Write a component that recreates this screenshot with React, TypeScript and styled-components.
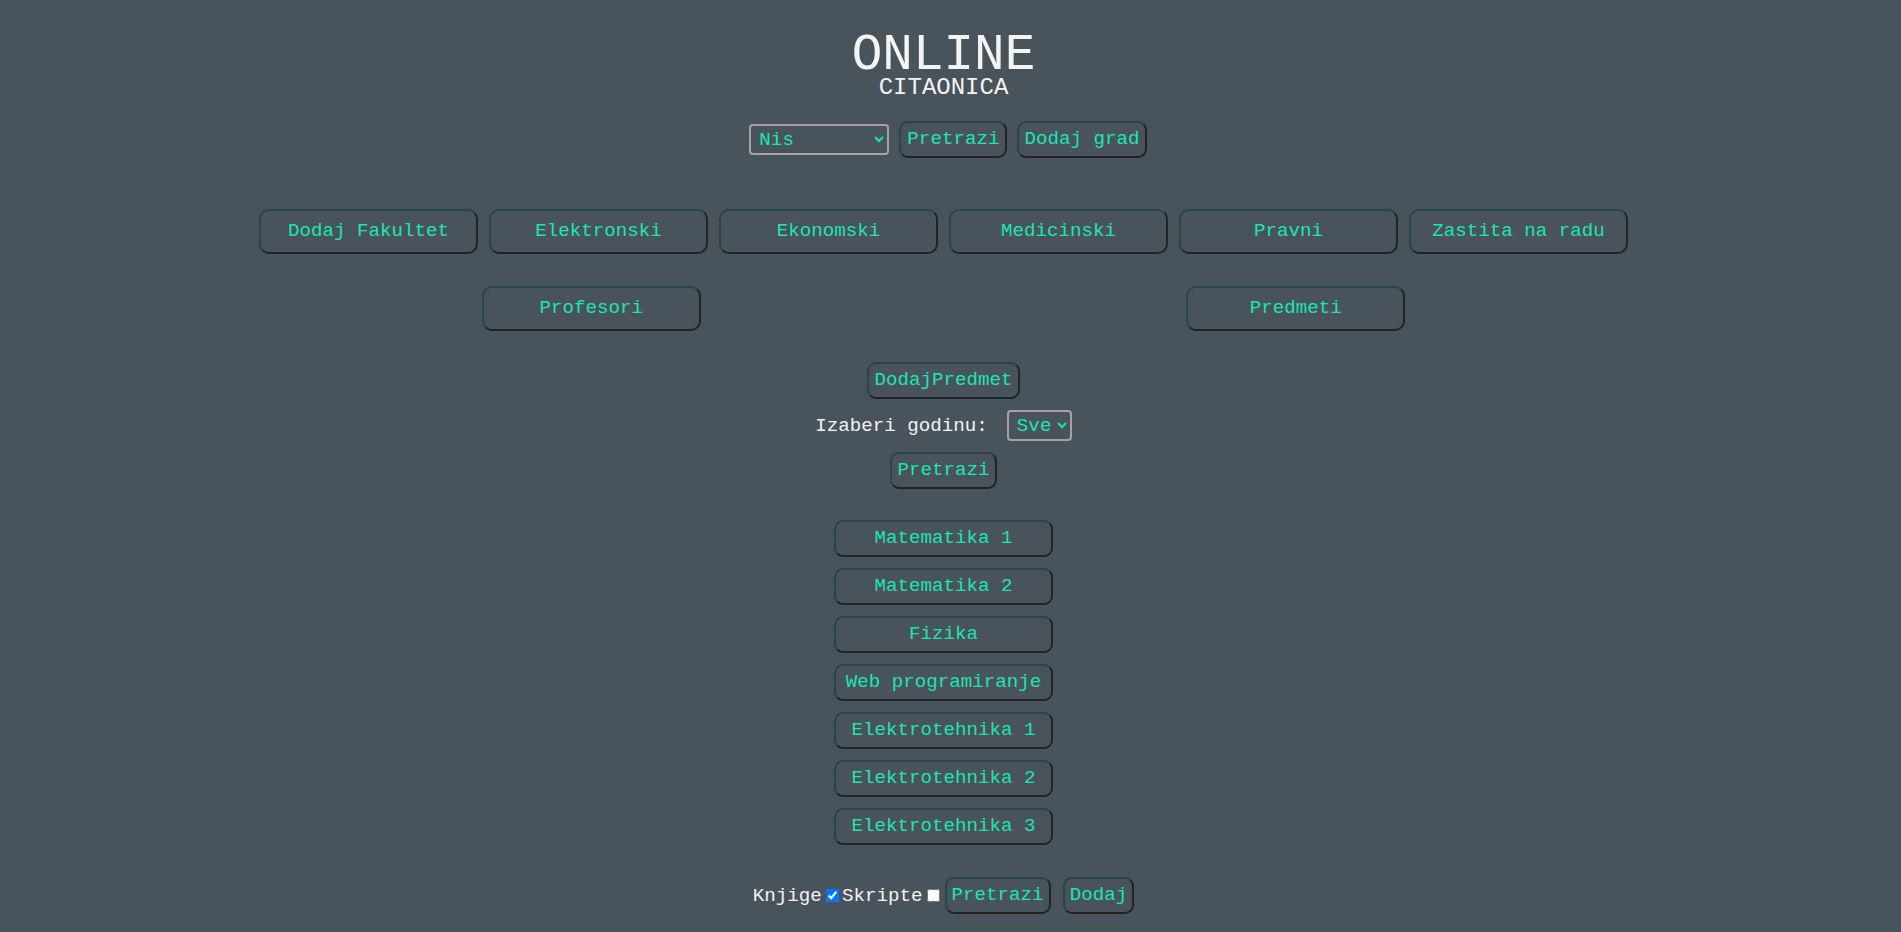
import React from "react";
import styled, { createGlobalStyle } from "styled-components";

const Global = createGlobalStyle`
  html, body { margin: 0; padding: 0; background: #48535b; }
  body { font-family: "Courier New", "Liberation Mono", monospace; font-size: 19.2px; color: #f2f2f2; }
`;

const Page = styled.div`
  display: flex;
  flex-direction: column;
  align-items: center;
  padding: 36px 14px 20px 0;
  min-height: 932px;
  box-sizing: border-box;
`;

const Title = styled.h1`
  margin: 0;
  font-family: "Courier New", "Liberation Mono", monospace;
  font-weight: normal;
  font-size: 51px;
  line-height: 40px;
  color: #f4f4f4;
`;

const Subtitle = styled.div`
  font-size: 24px;
  line-height: 24px;
  color: #f4f4f4;
`;

const Row = styled.div<{ $top: number; $gap?: number; $shift?: number }>`
  display: flex;
  align-items: center;
  justify-content: center;
  gap: ${(p) => p.$gap ?? 10}px;
  margin-top: ${(p) => p.$top}px;
  margin-left: ${(p) => p.$shift ?? 0}px;
`;

const SplitRow = styled.div<{ $top: number }>`
  display: flex;
  justify-content: space-around;
  width: 1409px;
  margin-top: ${(p) => p.$top}px;
`;

const Column = styled.div<{ $top: number }>`
  display: flex;
  flex-direction: column;
  align-items: center;
  gap: 11px;
  margin-top: ${(p) => p.$top}px;
`;

const Button = styled.button<{ $w?: number; $h?: number; $pad?: number; $ml?: number }>`
  font-family: "Courier New", "Liberation Mono", monospace;
  font-size: 19.2px;
  line-height: 23px;
  color: #1de5b2;
  background: #48535b;
  border: 2px solid;
  border-color: #25474a #1f2427 #1f2427 #25474a;
  border-radius: ${(p) => (p.$h && p.$h > 40 ? 10 : 9)}px;
  padding: 0 ${(p) => p.$pad ?? 5}px;
  margin-left: ${(p) => p.$ml ?? 0}px;
  width: ${(p) => (p.$w ? `${p.$w}px` : "auto")};
  height: ${(p) => p.$h ?? 37}px;
  box-sizing: border-box;
  white-space: nowrap;
  cursor: pointer;
`;

const Select = styled.select<{ $w: number }>`
  font-family: "Courier New", "Liberation Mono", monospace;
  font-size: 19.2px;
  color: #1de5b2;
  background: #48535b;
  border: 2px solid #a3a3a3;
  border-radius: 4px;
  width: ${(p) => p.$w}px;
  height: 31px;
  padding: 0 4px;
  box-sizing: border-box;
`;

const Label = styled.span`
  color: #f2f2f2;
  font-size: 19.2px;
  white-space: pre;
`;

const Check = styled.input`
  width: 13px;
  height: 13px;
  margin: 3px 3px 3px 4px;
`;

const fakulteti = ["Dodaj Fakultet", "Elektronski", "Ekonomski", "Medicinski", "Pravni", "Zastita na radu"];
const predmeti = [
  "Matematika 1",
  "Matematika 2",
  "Fizika",
  "Web programiranje",
  "Elektrotehnika 1",
  "Elektrotehnika 2",
  "Elektrotehnika 3",
];

export default function App() {
  return (
    <>
      <Global />
      <Page>
        <Title>ONLINE</Title>
        <Subtitle>CITAONICA</Subtitle>

        <Row $top={21} $gap={10} $shift={9}>
          <Select $w={140} defaultValue="Nis">
            <option value="Nis">Nis</option>
            <option value="Beograd">Beograd</option>
          </Select>
          <Button $pad={6}>Pretrazi</Button>
          <Button>Dodaj grad</Button>
        </Row>

        <Row $top={51} $gap={11}>
          {fakulteti.map((f) => (
            <Button key={f} $w={219} $h={45}>
              {f}
            </Button>
          ))}
        </Row>

        <SplitRow $top={32}>
          <Button $w={219} $h={45}>Profesori</Button>
          <Button $w={219} $h={45}>Predmeti</Button>
        </SplitRow>

        <Row $top={31}>
          <Button $pad={5}>DodajPredmet</Button>
        </Row>

        <Row $top={11} $gap={19}>
          <Label>Izaberi godinu:</Label>
          <Select $w={65} defaultValue="Sve">
            <option value="Sve">Sve</option>
            <option value="1">1</option>
            <option value="2">2</option>
          </Select>
        </Row>

        <Row $top={11}>
          <Button>Pretrazi</Button>
        </Row>

        <Column $top={31}>
          {predmeti.map((p) => (
            <Button key={p} $w={219}>
              {p}
            </Button>
          ))}
        </Column>

        <Row $top={32} $gap={0}>
          <Label>Knjige</Label>
          <Check type="checkbox" defaultChecked />
          <Label>Skripte</Label>
          <Check type="checkbox" />
          <Button $ml={2}>Pretrazi</Button>
          <Button $ml={12}>Dodaj</Button>
        </Row>
      </Page>
    </>
  );
}
